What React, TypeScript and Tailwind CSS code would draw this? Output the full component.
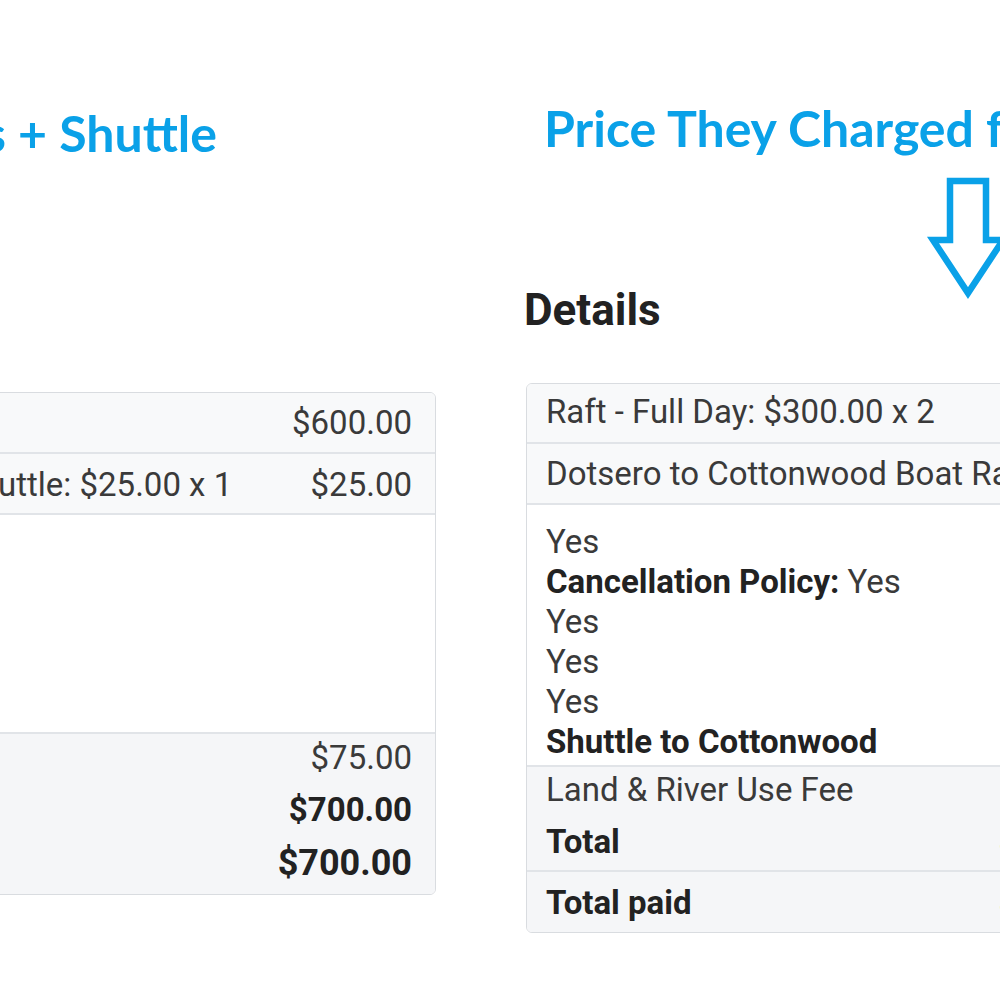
import React from 'react';

const titleFont = { fontFamily: 'Lato, "Open Sans", sans-serif' };

type Line = { label: string; value?: string; bold?: boolean; big?: boolean };

const Row: React.FC<{ line: Line }> = ({ line }) => (
  <div
    className={`flex justify-between whitespace-nowrap ${
      line.big ? 'text-[36px] leading-[44px] font-bold text-[#222]' : line.bold ? 'font-bold text-[#222]' : ''
    }`}
  >
    <span>{line.label}</span>
    {line.value && <span>{line.value}</span>}
  </div>
);

const ArrowDown: React.FC = () => (
  <svg className="absolute left-[920px] top-[170px]" width="100" height="135" viewBox="0 0 100 135" fill="none">
    <path d="M30 11 H66 V70 H83 L48 123 L13 70 H30 Z" stroke="#0aa1e8" strokeWidth="6.5" strokeLinejoin="miter" />
  </svg>
);

export default function App() {
  const cell = 'pl-[19px] pr-[23px]';
  const bodyText = 'text-[33px] leading-[40px] text-[#3a3a3a]';

  return (
    <div
      className="relative w-[1000px] h-[1000px] overflow-hidden bg-white flex"
      style={{ fontFamily: 'Roboto, "Liberation Sans", sans-serif' }}
    >
      {/* left receipt: what they should have charged */}
      <div className="ml-[-579px] w-[1015px] shrink-0 flex flex-col">
        <div
          className="pt-[103px] pr-[219px] text-right text-[50px] leading-[60px] font-bold text-[#0aa1e8] whitespace-nowrap"
          style={titleFont}
        >
          Boats + Shuttle
        </div>

        <div className={`mt-[229px] border border-[#d9dce0] rounded-[6px] overflow-hidden ${bodyText}`}>
          <div className={`${cell} pt-[10px] pb-[9px] bg-[#f8f9fa] border-b-2 border-[#e1e4e8]`}>
            <Row line={{ label: 'Raft - Full Day: $300.00 x 2', value: '$600.00' }} />
          </div>
          <div className={`${cell} pt-[11px] pb-[8px] bg-[#f8f9fa] border-b-2 border-[#e1e4e8]`}>
            <Row line={{ label: 'Dotsero to Cottonwood Boat Ramp Shuttle: $25.00 x 1', value: '$25.00' }} />
          </div>
          <div className={`${cell} pt-[17px] pb-[0px] bg-white border-b-2 border-[#e1e4e8]`}>
            <div>Yes</div>
            <div>
              <b className="text-[#222]">Cancellation Policy:</b> Yes
            </div>
            <div>Yes</div>
            <div>Yes</div>
            <div>Yes</div>
          </div>
          <div className={`${cell} pt-[4px] pb-[9px] bg-[#f5f6f8] flex flex-col gap-[12px]`}>
            <Row line={{ label: 'Land & River Use Fee', value: '$75.00' }} />
            <Row line={{ label: 'Total', value: '$700.00', bold: true }} />
            <div className="-mt-[1px]">
              <Row line={{ label: 'Total paid', value: '$700.00', big: true }} />
            </div>
          </div>
        </div>
      </div>

      {/* right receipt: what they actually charged */}
      <div className="ml-[90px] w-[620px] shrink-0 flex flex-col">
        <div
          className="pt-[98px] pl-[18px] text-[50px] leading-[60px] font-bold text-[#0aa1e8] whitespace-nowrap"
          style={titleFont}
        >
          Price They Charged for Boats + Shuttle
        </div>

        <h3 className="mt-[126px] -ml-[2px] text-[44px] leading-[52px] font-bold text-[#222]">Details</h3>

        <div className={`mt-[47px] border border-[#d9dce0] rounded-[6px] overflow-hidden ${bodyText}`}>
          <div className={`${cell} pt-[8px] pb-[10px] bg-[#f8f9fa] border-b-2 border-[#e1e4e8]`}>
            <Row line={{ label: 'Raft - Full Day: $300.00 x 2', value: '$600.00' }} />
          </div>
          <div className={`${cell} pt-[10px] pb-[9px] bg-[#f8f9fa] border-b-2 border-[#e1e4e8]`}>
            <Row line={{ label: 'Dotsero to Cottonwood Boat Ramp Shuttle: $25.00 x 1', value: '$25.00' }} />
          </div>
          <div className={`${cell} pt-[17px] pb-[3px] bg-white border-b-2 border-[#e1e4e8] whitespace-nowrap`}>
            <div>Yes</div>
            <div>
              <b className="text-[#222]">Cancellation Policy:</b> Yes
            </div>
            <div>Yes</div>
            <div>Yes</div>
            <div>Yes</div>
            <div className="font-bold text-[#222]">Shuttle to Cottonwood</div>
          </div>
          <div className={`${cell} pt-[3px] pb-[8px] bg-[#f5f6f8] border-b-2 border-[#e1e4e8] flex flex-col gap-[12px]`}>
            <Row line={{ label: 'Land & River Use Fee', value: '$75.00' }} />
            <Row line={{ label: 'Total', value: '$700.00', bold: true }} />
          </div>
          <div className={`${cell} pt-[11px] pb-[9px] bg-[#f5f6f8]`}>
            <Row line={{ label: 'Total paid', value: '$700.00', bold: true }} />
          </div>
        </div>
      </div>

      <ArrowDown />
    </div>
  );
}
